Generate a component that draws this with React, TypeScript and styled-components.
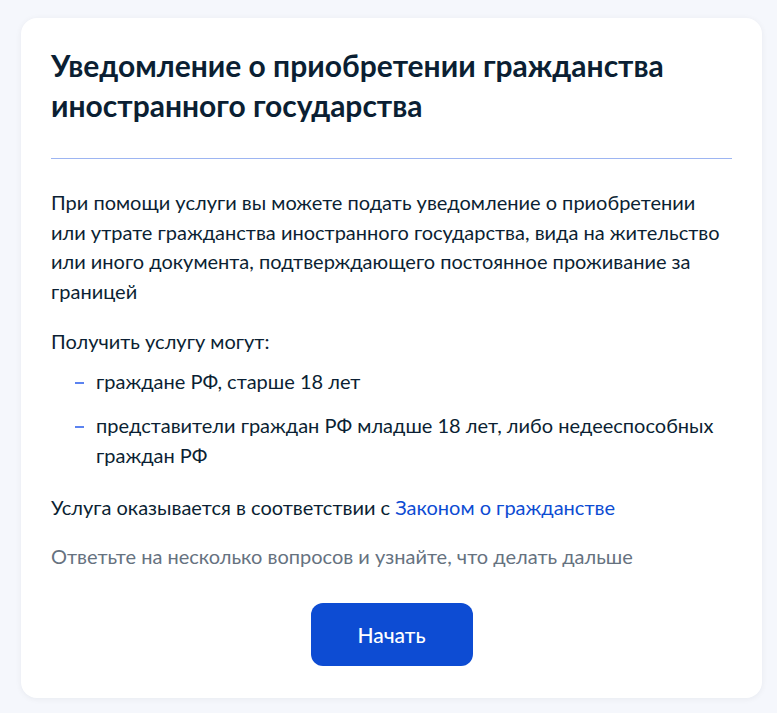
import React from 'react';
import styled, { createGlobalStyle } from 'styled-components';

const GlobalStyle = createGlobalStyle`
  html, body {
    margin: 0;
    padding: 0;
    background: #f5f7fc;
  }
  body {
    font-family: Lato, "Noto Sans", "Liberation Sans", sans-serif;
    color: #0b1f33;
  }
`;

const Page = styled.div`
  padding: 18px 15px 16px 21px;
  box-sizing: border-box;
  min-height: 100vh;
`;

const Card = styled.section`
  background: #ffffff;
  border-radius: 16px;
  box-shadow: 0 1px 6px rgba(11, 31, 51, 0.06);
  padding: 27px 30px 32px;
  display: flex;
  flex-direction: column;
`;

const Title = styled.h1`
  margin: 0;
  font-size: 30px;
  line-height: 40px;
  font-weight: 700;
  color: #0b1f33;
`;

const Divider = styled.hr`
  border: none;
  height: 1px;
  background: #9db5f2;
  margin: 33px 0 29px;
`;

const Text = styled.p<{ $muted?: boolean; $gap?: number }>`
  margin: 0 0 ${p => p.$gap ?? 21}px;
  max-width: 672px;
  font-size: 20px;
  line-height: 29.5px;
  color: ${p => (p.$muted ? '#66727f' : '#0b1f33')};
`;

const List = styled.ul`
  list-style: none;
  margin: 0 0 23px;
  padding: 0 0 0 24px;
  display: flex;
  flex-direction: column;
  gap: 15px;
`;

const Item = styled.li`
  position: relative;
  padding-left: 21px;
  font-size: 20px;
  line-height: 29.5px;

  &::before {
    content: '';
    position: absolute;
    left: 0;
    top: 15px;
    width: 9px;
    height: 2px;
    background: #5b83f0;
  }
`;

const Link = styled.a`
  color: #0d4cd3;
  text-decoration: none;
`;

const Actions = styled.div`
  display: flex;
  justify-content: center;
  margin-top: 32px;
`;

const Button = styled.button`
  width: 162px;
  height: 63px;
  border: none;
  border-radius: 12px;
  background: #0d4cd3;
  color: #ffffff;
  font-family: Lato, "Noto Sans", "Liberation Sans", sans-serif;
  font-size: 21px;
  font-weight: 500;
  cursor: pointer;
`;

export default function App() {
  return (
    <>
      <GlobalStyle />
      <Page>
        <Card>
          <Title>Уведомление о приобретении гражданства иностранного государства</Title>
          <Divider />
          <Text>
            При помощи услуги вы можете подать уведомление о приобретении или утрате гражданства
            иностранного государства, вида на жительство или иного документа, подтверждающего
            постоянное проживание за границей
          </Text>
          <Text $gap={10}>Получить услугу могут:</Text>
          <List>
            <Item>граждане РФ, старше 18 лет</Item>
            <Item>представители граждан РФ младше 18 лет, либо недееспособных граждан РФ</Item>
          </List>
          <Text $gap={19}>
            Услуга оказывается в соответствии с <Link href="#">Законом о гражданстве</Link>
          </Text>
          <Text $muted $gap={0}>Ответьте на несколько вопросов и узнайте, что делать дальше</Text>
          <Actions>
            <Button>Начать</Button>
          </Actions>
        </Card>
      </Page>
    </>
  );
}
